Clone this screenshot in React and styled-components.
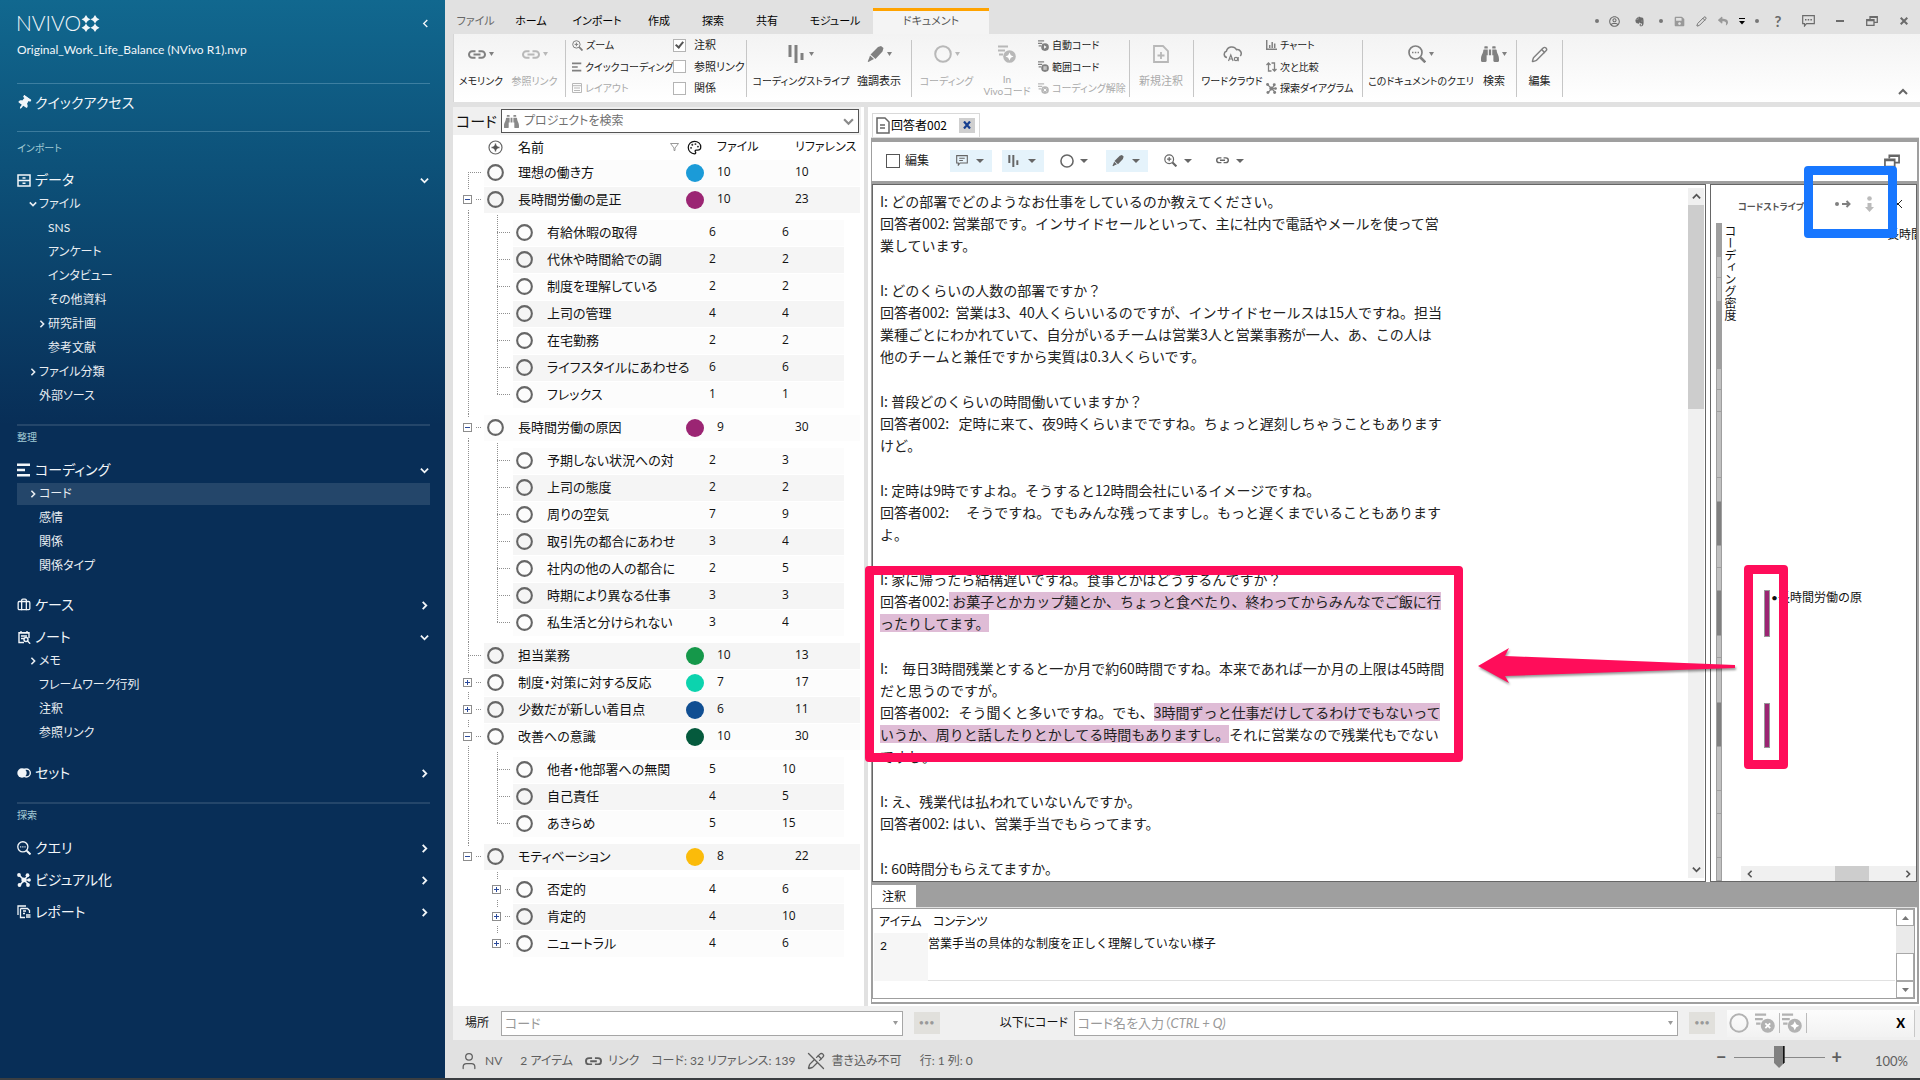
import React from "react";
import styled, { createGlobalStyle, css } from "styled-components";
import { Briefcase, Palette, Pencil, User, PencilOff } from "lucide-react";
import { FaThumbtack, FaBinoculars, FaSave, FaReply, FaEvernote, FaRegUserCircle } from "react-icons/fa";

const Global = createGlobalStyle`
  * { box-sizing: border-box; }
  body {
    margin: 0;
    background: #e1e1e1;
    color: #111;
    font-family: Lato, "Noto Sans CJK JP", sans-serif;
    font-feature-settings: "palt";
    font-size: 12px;
    line-height: 16px;
  }
  button, input, select {
    font: inherit;
    color: inherit;
    font-feature-settings: inherit;
    margin: 0;
    padding: 0;
    border: 0;
    border-radius: 0;
    background: none;
  }
  button { cursor: pointer; white-space: nowrap; }
  a { color: inherit; text-decoration: none; }
  svg { display: block; flex: none; }
  h1, h2, p { margin: 0; font: inherit; }
`;

/* ---------- icons ---------- */

const Svg = ({ w = 16, h = w, box, children, ...rest }) => (
  <svg width={w} height={h} viewBox={box || `0 0 ${w} ${h}`} fill="none" stroke="currentColor" aria-hidden="true" {...rest}>
    {children}
  </svg>
);

const Chevron = ({ dir = "down", size = 9, sw = 2 }) => {
  const d = { down: "M1 3l4 4 4-4", up: "M1 7l4-4 4 4", left: "M7 1L3 5l4 4", right: "M3 1l4 4-4 4" }[dir];
  return (
    <Svg w={size} box="0 0 10 10" strokeWidth={sw}>
      <path d={d} />
    </Svg>
  );
};

const Caret = ({ w = 6, up }) => (
  <Svg w={w} h={4} box="0 0 6 4" stroke="none" preserveAspectRatio="none">
    <path d={up ? "M0 4h6L3 0z" : "M0 0h6L3 4z"} fill="currentColor" />
  </Svg>
);

const PinIcon = styled(FaThumbtack).attrs({ size: 14 })`
  transform: rotate(35deg);
`;

const LinkIcon = ({ w = 18 }) => (
  <Svg w={w} h={w / 2} box="0 0 18 9" strokeWidth="2">
    <path d="M7.5 1.2H4.3a3.3 3.3 0 000 6.6h3.2M10.5 1.2h3.2a3.3 3.3 0 010 6.6h-3.2M5.5 4.5h7" />
  </Svg>
);

const ZoomPlus = ({ w = 11 }) => (
  <Svg w={w} box="0 0 11 11">
    <circle cx="4.4" cy="4.4" r="3.7" />
    <path d="M4.4 2.6v3.6M2.6 4.4h3.6" />
    <path d="M7.2 7.2l3.3 3.3" strokeWidth="1.8" />
  </Svg>
);

const LinesIcon = ({ w = 10 }) => (
  <Svg w={w} box="0 0 14 14" strokeWidth="2.4">
    <path d="M0 1.8h13M0 7h8M0 12.2h13" />
  </Svg>
);

const LayoutIcon = () => (
  <Svg w={10}>
    <path d="M.5.5h9v9h-9zM0 2.7h10M2 5h6M2 7.5h6" />
  </Svg>
);

const StripesIcon = ({ w = 18 }) => (
  <Svg w={w} h={w} box="0 0 18 18" strokeWidth="3">
    <path d="M2 0v12M8 0v18M14 8v7" />
  </Svg>
);

const MarkerIcon = ({ w = 17 }) => (
  <Svg w={w} box="0 0 17 17" stroke="none" fill="currentColor">
    <path d="M11 1l3-1 2.500 2-1 3.500-7 7.500-5-4.500zM3 9.500L7 13l-2.500 1.200-3 1.800-.8-.6L2 12.500z" />
  </Svg>
);

const CodeRing = ({ w = 18, sw = 2 }) => (
  <Svg w={w} box="0 0 18 18" strokeWidth={sw}>
    <circle cx="9" cy="9" r="7.8" />
  </Svg>
);

const CodeBadge = ({ w = 11, kind = "plus" }) => (
  <Svg w={w} box="0 0 18 18" strokeWidth="2">
    <path d="M0 1.500h10M0 5.500h7M1 9.500h4" />
    <circle cx="11.500" cy="11.500" r="6.300" fill="currentColor" stroke="none" />
    {kind === "plus" && <path d="M11.500 7.500l1.300 2.700 2.700 1.300-2.700 1.300-1.300 2.700-1.300-2.700-2.700-1.300 2.700-1.300z" fill="#fff" stroke="none" />}
    {kind === "play" && <path d="M10 8.500l4 3-4 3z" fill="#fff" stroke="none" />}
    {kind === "range" && <path d="M10 8.500v6M13 8.500v6" stroke="#fff" strokeWidth="1.500" />}
    {kind === "x" && <path d="M9.300 9.300l4.400 4.400M13.700 9.300l-4.400 4.400" stroke="#fff" strokeWidth="1.600" />}
  </Svg>
);

const NoteAdd = () => (
  <Svg w={16} h={18} strokeWidth="1.800">
    <path d="M1 1h9l5 5v11H1zM8 7v7M4.500 10.500h7" />
  </Svg>
);

const CloudIcon = () => (
  <Svg w={19} h={16} strokeWidth="1.500">
    <path d="M4 11.500a3.200 3.200 0 01-.6-6.200A5.500 5.500 0 0113.500 3.700a3.900 3.900 0 013.800 6.300" />
    <path d="M5.500 15l2.300-6 2.300 6M6.500 13h3" strokeWidth="1.200" />
    <circle cx="13" cy="13" r="1.700" strokeWidth="1.200" />
    <path d="M15.200 11v4.200" strokeWidth="1.200" />
  </Svg>
);

const ChartIcon = () => (
  <Svg w={11} h={10} strokeWidth="1.500">
    <path d="M.7 0v9.300H11M3.700 8V5M6.200 8V2M8.700 8V3.500" />
  </Svg>
);

const CompareIcon = () => (
  <Svg w={11} h={10} strokeWidth="1.300">
    <path d="M2.500 1v8H5.500M.5 3l2-2 2 2M8.500 9V1H5.500M6.500 7l2 2 2-2" />
  </Svg>
);

const NetIcon = ({ w = 11 }) => (
  <Svg w={w} box="0 0 14 14" strokeWidth="1.600">
    <path d="M2 2l10 10M11 2.500L3 12M7 7h6" />
    <g fill="currentColor" stroke="none">
      <circle cx="2" cy="2" r="1.900" />
      <circle cx="10.500" cy="2.200" r="1.900" />
      <circle cx="12.200" cy="7" r="1.700" />
      <circle cx="2.500" cy="12" r="1.900" />
      <circle cx="11" cy="12" r="1.900" />
      <circle cx="6.700" cy="7" r="2.400" />
    </g>
  </Svg>
);

const QueryIcon = ({ w = 18 }) => (
  <Svg w={w} box="0 0 18 18" strokeWidth="1.700">
    <circle cx="7.500" cy="7.500" r="6.500" />
    <path d="M12.500 12.500l4.800 4.800" strokeWidth="2.600" />
    <path d="M4 7.500h7" strokeDasharray="1.500 1.300" />
  </Svg>
);

const DataIcon = () => (
  <Svg w={14} h={13} strokeWidth="1.500">
    <path d="M1 1h12v11H1zM1 6.500h12M5.500 4h3M5.500 9.300h3" />
  </Svg>
);

const NotesIcon = () => (
  <Svg w={14} h={13} strokeWidth="1.400">
    <path d="M7 11.500H2V1.800h10V7M1.500 2h11M4 0v2M10 0v2M4 5h6M4 7.500h3" />
    <circle cx="9" cy="8.500" r="2" />
    <path d="M10.500 10l2.700 2.700" />
  </Svg>
);

const SetIcon = () => (
  <Svg w={14} h={10}>
    <circle cx="5" cy="5" r="4.700" fill="currentColor" stroke="none" />
    <circle cx="9.300" cy="5" r="4" strokeWidth="1.400" />
  </Svg>
);

const ReportIcon = () => (
  <Svg w={14} h={14} strokeWidth="1.300">
    <path d="M1 10V1h8M3.500 3.500h7l2 2V8M3.500 3.500v9H8M6 6h3M6 8.500h2M9 10h4.500M9 12h4.500" />
  </Svg>
);

const ChatIcon = ({ w = 13, dots = true }) => (
  <Svg w={w} h={w - 1} box="0 0 13 12" strokeWidth="1.200">
    <path d="M.7.7h11.600v8H4.500L2.500 11V8.700H.7z" />
    {dots ? <path d="M3 4.700h7" strokeWidth="1.500" strokeDasharray="1.500 1.200" /> : <path d="M3.500 3.500h6M3.500 6h4" />}
  </Svg>
);

const RestoreIcon = ({ w = 12 }) => (
  <Svg w={w} h={w - 2} box="0 0 12 10" strokeWidth="1.300">
    <path d="M4 3V.7h7.300v5.600H8M.7 3.700H8v5.600H.7zM.7 4.500H8M4 1.400h7" />
  </Svg>
);

const DocIcon = () => (
  <Svg w={14} h={17} strokeWidth="1.500">
    <path d="M1 1h8l4 4v11H1zM4 8h5M4 11h5" />
  </Svg>
);

const AddRing = () => (
  <Svg w={15} stroke="#666">
    <circle cx="7.500" cy="7.500" r="6.500" strokeWidth="1.200" />
    <path d="M7.500 3.500v8M3.500 7.500h8" strokeWidth="1.400" />
    <path d="M7.500 4.500l3 3-3 3-3-3z" fill="#555" stroke="none" />
  </Svg>
);

const FilterIcon = () => (
  <Svg w={9} h={8} stroke="#999" strokeWidth="1">
    <path d="M.5.5h8L5 5v2.500H4V5z" />
  </Svg>
);

const LogoMark = () => (
  <Svg w={19} h={17} fill="currentColor" stroke="none">
    {[[5, 4.300], [14, 4.300], [5, 12.700], [14, 12.700]].map(([x, y]) => (
      <path key={`${x}-${y}`} d={`M${x} ${y - 4.200}Q${x + 1} ${y - 1.200} ${x + 4.500} ${y}Q${x + 1} ${y + 1.200} ${x} ${y + 4.200}Q${x - 1} ${y + 1.200} ${x - 4.500} ${y}Q${x - 1} ${y - 1.200} ${x} ${y - 4.200}z`} />
    ))}
    {[[5, 4.300], [14, 4.300], [5, 12.700], [14, 12.700]].map(([x, y]) => (
      <path key={`c${x}-${y}`} d={`M${x} ${y - 2.600}l2.600 2.600-2.600 2.600-2.600-2.600z`} />
    ))}
  </Svg>
);

/* ---------- shell ---------- */

const Shell = styled.div`
  display: flex;
  height: 100vh;
  border-bottom: 2px solid #3b3e41;
`;

const Main = styled.main`
  flex: 1;
  min-width: 0;
  display: flex;
  flex-direction: column;
`;

/* ---------- sidebar ---------- */

const Sidebar = styled.nav`
  flex: none;
  width: 445px;
  padding: 10px 15px 0 16px;
  color: #f2f6f9;
  background: linear-gradient(#11688f 0, #0d527a 160px, #082e57 425px);
`;

const Brand = styled.div`
  display: flex;
  align-items: center;
  height: 26px;
`;

const BrandName = styled.span`
  font-size: 21px;
  font-weight: 300;
  line-height: 26px;
`;

const CollapseButton = styled.button`
  margin-left: auto;
`;

const ProjectName = styled.p`
  margin: 6px 0 25px;
  padding-left: 1px;
`;

const Rule = styled.hr`
  margin: ${(p) => p.$top || 0}px 0 0 1px;
  border: 0;
  height: 1px;
  background: rgba(130, 180, 205, 0.4);
  ${(p) => p.$thick && css`height: 2px; background: #24466a;`}
`;

const SectionLabel = styled.h2`
  margin-top: ${(p) => p.$top || 1}px;
  padding-left: 1px;
  font-size: 10px;
  line-height: 20px;
  color: #a3cbd5;
`;

const NavHead = styled.button`
  display: flex;
  align-items: center;
  gap: 4px;
  width: 100%;
  height: 24px;
  margin-top: ${(p) => p.$top || 0}px;
  padding: 0 1px;
  font-size: 14px;
  text-align: left;
  & > span { flex: 1; }
`;

const NavLink = styled.a`
  display: flex;
  align-items: center;
  height: 24px;
  margin-left: 1px;
  padding-left: ${(p) => (p.$deep ? 18 : 9)}px;
  border: solid transparent;
  border-width: 1px 0;
  color: #e8edf2;
  background: ${(p) => (p.$active ? "#24466a padding-box" : "none")};
`;

const Twisty = styled.span`
  width: 13px;
  display: flex;
  justify-content: center;
`;

function Nav({ icon, label, dir, top }) {
  return (
    <NavHead $top={top}>
      {icon}
      <span>{label}</span>
      {dir && <Chevron dir={dir} />}
    </NavHead>
  );
}

const Leaf = ({ label, deep, dir, active }) => (
  <NavLink href="#" $deep={deep} $active={active}>
    <Twisty>{dir && <Chevron dir={dir} size={8} />}</Twisty>
    {label}
  </NavLink>
);

function SideNav() {
  return (
    <Sidebar aria-label="ナビゲーション">
      <Brand>
        <BrandName>NVIVO</BrandName>
        <LogoMark />
        <CollapseButton aria-label="折りたたむ"><Chevron dir="left" size={9} sw={1.500} /></CollapseButton>
      </Brand>
      <ProjectName>Original_Work_Life_Balance (NVivo R1).nvp</ProjectName>
      <Rule />
      <Nav top={7} icon={<PinIcon />} label="クイックアクセス" />
      <Rule $top={16} />
      <SectionLabel $top={6}>インポート</SectionLabel>
      <Nav top={10} icon={<DataIcon />} label="データ" dir="down" />
      <Leaf label="ファイル" dir="down" />
      <Leaf deep label="SNS" />
      <Leaf deep label="アンケート" />
      <Leaf deep label="インタビュー" />
      <Leaf deep label="その他資料" />
      <Leaf deep label="研究計画" dir="right" />
      <Leaf deep label="参考文献" />
      <Leaf label="ファイル分類" dir="right" />
      <Leaf label="外部ソース" />
      <Rule $top={16} $thick />
      <SectionLabel>整理</SectionLabel>
      <Nav top={11} icon={<LinesIcon w={14} />} label="コーディング" dir="down" />
      <Leaf label="コード" dir="right" active />
      <Leaf label="感情" />
      <Leaf label="関係" />
      <Leaf label="関係タイプ" />
      <Nav top={15} icon={<Briefcase size={14} strokeWidth={2.200} />} label="ケース" dir="right" />
      <Nav top={8} icon={<NotesIcon />} label="ノート" dir="down" />
      <Leaf label="メモ" dir="right" />
      <Leaf label="フレームワーク行列" />
      <Leaf label="注釈" />
      <Leaf label="参照リンク" />
      <Nav top={16} icon={<SetIcon />} label="セット" dir="right" />
      <Rule $top={17} $thick />
      <SectionLabel>探索</SectionLabel>
      <Nav top={11} icon={<QueryIcon w={14} />} label="クエリ" dir="right" />
      <Nav top={8} icon={<NetIcon w={14} />} label="ビジュアル化" dir="right" />
      <Nav top={8} icon={<ReportIcon />} label="レポート" dir="right" />
    </Sidebar>
  );
}

/* ---------- title bar and ribbon ---------- */

const TitleBar = styled.header`
  flex: none;
  display: flex;
  height: 34px;
  padding-left: 9px;
  font-size: 11px;
`;

const Tab = styled.button`
  height: 26px;
  margin-top: 8px;
  width: ${(p) => p.$w}px;
  color: ${(p) => (p.$muted ? "#666" : "#000")};
  ${(p) => p.$active && css`
    border-top: 3px solid #ffa300;
    background: #f4f4f4;
    color: #555;
    padding-bottom: 3px;
  `}
`;

const QuickTools = styled.div`
  display: flex;
  align-items: center;
  margin-left: auto;
  height: 42px;
  color: #6b6b6b;
`;

const QuickTool = styled.button`
  display: flex;
  justify-content: center;
  align-items: center;
  width: ${(p) => p.$w}px;
  font-size: 15px;
  font-weight: 700;
`;

const Dot = styled.span`
  width: 14px;
  display: flex;
  justify-content: center;
  &::before {
    content: "";
    width: 4px;
    height: 4px;
    border-radius: 50%;
    background: #777;
  }
`;

const Ribbon = styled.div`
  flex: none;
  display: flex;
  height: 68px;
  margin-left: 8px;
  border-left: 1px solid #d6d6d6;
  background: linear-gradient(#f3f3f3, #fff);
  font-size: 11px;
`;

const Group = styled.div`
  display: flex;
  height: 57px;
  margin-top: 6px;
  width: ${(p) => p.$w}px;
  padding-left: ${(p) => p.$pad || 0}px;
  border-right: 1px solid #c6c6c6;
`;

const BigButton = styled.button`
  display: flex;
  flex-direction: column;
  align-items: center;
  width: ${(p) => p.$w}px;
  color: ${(p) => (p.disabled ? "#aaa" : "#222")};
`;

const BigIcon = styled.span`
  display: flex;
  align-items: center;
  gap: 3px;
  height: 28px;
  margin-bottom: 5px;
  color: ${(p) => (p.$off ? "#b8b8b8" : "#808080")};
`;

const BigLabel = styled.span`
  white-space: pre;
  font-size: ${(p) => (p.$kanji ? 11 : 10)}px;
  line-height: ${(p) => (p.$two ? 12 : 16)}px;
`;

const SmallColumn = styled.div`
  display: flex;
  flex-direction: column;
  justify-content: space-between;
  height: 59px;
  margin-top: -3px;
  width: ${(p) => p.$w}px;
`;

const SmallButton = styled.button`
  display: flex;
  align-items: center;
  gap: 3px;
  height: 16px;
  font-size: 10px;
  color: ${(p) => (p.disabled ? "#aaa" : "#222")};
  & > svg { color: ${(p) => (p.disabled ? "#b8b8b8" : "#808080")}; }
`;

const CheckLabel = styled.label`
  display: flex;
  align-items: center;
  gap: ${(p) => p.$gap || 8}px;
  height: 16px;
  color: #222;
`;

const CheckBox = styled.input.attrs({ type: "checkbox" })`
  appearance: none;
  width: ${(p) => p.$size || 13}px;
  height: ${(p) => p.$size || 13}px;
  border: 1px solid ${(p) => p.$line || "#b4b4b4"};
  background: #fff;
  display: grid;
  place-items: center;
  &:checked::before {
    content: "";
    width: 3px;
    height: 6px;
    margin-bottom: 2px;
    border: solid #555;
    border-width: 0 2px 2px 0;
    transform: rotate(40deg);
  }
`;

const RibbonEnd = styled.button`
  align-self: flex-end;
  margin: 0 12px 5px auto;
  color: #666;
`;

const Big = ({ icon, label, w, off, menu, two, kanji }) => (
  <BigButton $w={w} disabled={off}>
    <BigIcon $off={off}>{icon}{menu && <Caret w={5} />}</BigIcon>
    <BigLabel $two={two} $kanji={kanji}>{label}</BigLabel>
  </BigButton>
);

function Top() {
  return (
    <>
      <TitleBar>
        <Tab $w={43} $muted>ファイル</Tab>
        <Tab $w={68}>ホーム</Tab>
        <Tab $w={64}>インポート</Tab>
        <Tab $w={60}>作成</Tab>
        <Tab $w={48}>探索</Tab>
        <Tab $w={60}>共有</Tab>
        <Tab $w={76}>モジュール</Tab>
        <Tab $w={116} $active>ドキュメント</Tab>
        <QuickTools>
          <Dot />
          <QuickTool $w={20} aria-label="ユーザー"><FaRegUserCircle size={11} /></QuickTool>
          <QuickTool $w={30} aria-label="Evernote"><FaEvernote size={11} /></QuickTool>
          <Dot />
          <QuickTool $w={22} aria-label="保存"><FaSave size={11} color="#999" /></QuickTool>
          <QuickTool $w={22} aria-label="編集"><Pencil size={11} /></QuickTool>
          <QuickTool $w={22} aria-label="元に戻す"><FaReply size={10} color="#999" /></QuickTool>
          <QuickTool $w={16} aria-label="カスタマイズ">
            <Svg w={6} h={7} stroke="#000"><path d="M0 .5h6" /><path d="M0 3h6L3 6.500z" fill="#000" stroke="none" /></Svg>
          </QuickTool>
          <Dot />
          <QuickTool $w={28}>?</QuickTool>
          <QuickTool $w={32} aria-label="フィードバック"><ChatIcon /></QuickTool>
          <QuickTool $w={32} aria-label="最小化"><Svg w={8} h={2} strokeWidth="2"><path d="M0 1h8" /></Svg></QuickTool>
          <QuickTool $w={32} aria-label="元のサイズに戻す"><RestoreIcon /></QuickTool>
          <QuickTool $w={32} aria-label="閉じる"><Svg w={8} h={8} strokeWidth="2"><path d="M.7.7l6.600 6.600M7.300.7L.7 7.300" /></Svg></QuickTool>
        </QuickTools>
      </TitleBar>
      <Ribbon>
        <Group $w={112} $pad={2}>
          <Big w={50} icon={<LinkIcon />} label="メモリンク" menu />
          <Big w={57} icon={<LinkIcon />} label="参照リンク" menu off />
        </Group>
        <Group $w={181} $pad={6}>
          <SmallColumn $w={101}>
            <SmallButton><ZoomPlus />ズーム</SmallButton>
            <SmallButton><LinesIcon />クイックコーディング</SmallButton>
            <SmallButton disabled><LayoutIcon />レイアウト</SmallButton>
          </SmallColumn>
          <SmallColumn>
            <CheckLabel><CheckBox defaultChecked />注釈</CheckLabel>
            <CheckLabel><CheckBox />参照リンク</CheckLabel>
            <CheckLabel><CheckBox />関係</CheckLabel>
          </SmallColumn>
        </Group>
        <Group $w={165} $pad={5}>
          <Big w={98} icon={<StripesIcon />} label="コーディングストライプ" menu />
          <Big w={58} icon={<MarkerIcon />} label="強調表示" menu kanji />
        </Group>
        <Group $w={218} $pad={5}>
          <Big w={59} icon={<CodeRing />} label="コーディング" menu off />
          <Big w={62} icon={<CodeBadge w={18} />} label={"In\nVivoコード"} off two />
          <SmallColumn>
            <SmallButton><CodeBadge kind="play" />自動コード</SmallButton>
            <SmallButton><CodeBadge kind="range" />範囲コード</SmallButton>
            <SmallButton disabled><CodeBadge kind="x" />コーディング解除</SmallButton>
          </SmallColumn>
        </Group>
        <Group $w={64}>
          <Big w={62} icon={<NoteAdd />} label="新規注釈" off kanji />
        </Group>
        <Group $w={169} $pad={4}>
          <Big w={68} icon={<CloudIcon />} label="ワードクラウド" />
          <SmallColumn>
            <SmallButton><ChartIcon />チャート</SmallButton>
            <SmallButton><CompareIcon />次と比較</SmallButton>
            <SmallButton><NetIcon />探索ダイアグラム</SmallButton>
          </SmallColumn>
        </Group>
        <Group $w={154} $pad={4}>
          <Big w={108} icon={<QueryIcon />} label="このドキュメントのクエリ" menu />
          <Big w={38} icon={<FaBinoculars size={18} />} label="検索" menu kanji />
        </Group>
        <Group $w={46}>
          <Big w={46} icon={<Pencil size={17} />} label="編集" kanji />
        </Group>
        <RibbonEnd aria-label="リボンを閉じる"><Chevron dir="up" size={10} /></RibbonEnd>
      </Ribbon>
    </>
  );
}

/* ---------- code tree ---------- */

const Panels = styled.div`
  flex: 1;
  min-height: 0;
  display: flex;
  gap: 4px;
  margin-top: 5px;
  padding-left: 8px;
`;

const CodePanel = styled.section`
  flex: none;
  width: 411px;
  background: #fff;
  overflow: hidden;
`;

const CodeTop = styled.div`
  display: flex;
  align-items: center;
  height: 28px;
  margin-right: 3px;
  padding: 0 2px 0 3px;
  background: #f0f0f0;
`;

const PanelTitle = styled.h1`
  flex: none;
  width: 45px;
  font-size: 15px;
`;

const SearchField = styled.div`
  flex: 1;
  display: flex;
  align-items: center;
  gap: 5px;
  height: 24px;
  padding: 0 4px 0 2px;
  border: 1px solid #555;
  background: #fff;
  color: #666;
  & > svg { color: #8a8a8a; }
  & > input {
    flex: 1;
    min-width: 0;
    outline: 0;
    font-size: 12px;
  }
  & > input::placeholder { color: #707070; opacity: 1; }
`;

const dots = (dir) => `repeating-linear-gradient(${dir}, #8f8f8f 0 1px, transparent 1px 2px)`;

const Tree = styled.table`
  display: block;
  font-size: 13px;
`;

const TreeHead = styled.thead`
  display: block;
`;

const TreeBody = styled.tbody`
  display: block;
  padding: ${(p) => (p.$child ? 6 : 0)}px 0;
  background-repeat: no-repeat;
  background-image: ${(p) => (p.$trunk ? dots("to bottom") : "none")}, ${(p) => (p.$child ? dots("to bottom") : "none")};
  background-position: 15px ${(p) => p.$from || 0}px, 44px 2px;
  background-size: 1px calc(100% - ${(p) => (p.$from || 0) + (p.$to || 0)}px), 1px calc(100% - 22px);
`;

const TreeRow = styled.tr`
  display: grid;
  grid-template-columns: ${(p) => (p.$child ? "60px 34px 162px 73px 1fr" : "31px 34px 161px 38px 78px 1fr")};
  align-items: center;
  height: 27px;
  padding-right: ${(p) => (p.$child ? 20 : 4)}px;
`;

const HeadRow = styled(TreeRow)`
  height: 24px;
`;

const Cell = styled.td`
  height: 26px;
  padding: 0;
  line-height: 24px;
  white-space: nowrap;
  overflow: hidden;
  background: ${(p) => (p.$odd ? "#f5f5f5" : "#fcfcfc")};
`;

const NumberCell = styled(Cell)`
  font-family: "Open Sans", sans-serif;
  font-size: 12px;
`;

const IconCell = styled(Cell)`
  display: flex;
  align-items: center;
  padding-left: ${(p) => p.$pad}px;
  color: #666;
`;

const HeadCell = styled.th`
  padding: 0 0 0 ${(p) => p.$pad || 0}px;
  display: flex;
  align-items: center;
  justify-content: space-between;
  font-weight: 400;
  font-size: ${(p) => (p.$kana ? 12 : 13)}px;
  white-space: nowrap;
`;

const Lead = styled.td`
  display: flex;
  align-items: center;
  justify-content: flex-end;
  height: 27px;
  padding: 0 2px 0 0;
  &::after {
    content: "";
    width: ${(p) => (p.$box ? 6 : 14)}px;
    height: 1px;
    background: ${dots("to right")};
  }
`;

const Expander = styled.button`
  display: grid;
  place-items: center;
  width: 9px;
  height: 9px;
  margin-right: 4px;
  border: 1px solid #8d8d8d;
  color: #2b4a9b;
  background: #fff;
  outline: 5px solid #fff;
  outline-offset: 0;
`;

const Swatch = styled.span`
  width: 18px;
  height: 18px;
  border-radius: 50%;
  background: ${(p) => p.$color};
`;

const BLUE = "#1b9bd8";
const PURPLE = "#9b2573";

const tree = [
  { from: 13, rows: [["理想の働き方", 10, 10, "", BLUE], ["長時間労働の是正", 10, 23, "-", PURPLE]] },
  { child: true, rows: [["有給休暇の取得", 6, 6], ["代休や時間給での調", 2, 2], ["制度を理解している", 2, 2], ["上司の管理", 4, 4], ["在宅勤務", 2, 2], ["ライフスタイルにあわせる", 6, 6], ["フレックス", 1, 1]] },
  { rows: [["長時間労働の原因", 9, 30, "-", PURPLE]] },
  { child: true, rows: [["予期しない状況への対", 2, 3], ["上司の態度", 2, 2], ["周りの空気", 7, 9], ["取引先の都合にあわせ", 3, 4], ["社内の他の人の都合に", 2, 5], ["時期により異なる仕事", 3, 3], ["私生活と分けられない", 3, 4]] },
  { shift: 1, rows: [["担当業務", 10, 13, "", "#15984a"], ["制度・対策に対する反応", 7, 17, "+", "#0cd3ae"], ["少数だが新しい着目点", 6, 11, "+", "#104e92"], ["改善への意識", 10, 30, "-", "#055a3d"]] },
  { child: true, rows: [["他者・他部署への無関", 5, 10], ["自己責任", 4, 5], ["あきらめ", 5, 15]] },
  { shift: 1, to: 14, rows: [["モティベーション", 8, 22, "-", "#fbbb0a"]] },
  { child: true, trunk: false, rows: [["否定的", 4, 6, "+"], ["肯定的", 4, 10, "+"], ["ニュートラル", 4, 6, "+"]] },
];

function CodeTree() {
  return (
    <CodePanel>
      <CodeTop>
        <PanelTitle>コード</PanelTitle>
        <SearchField>
          <FaBinoculars size={15} />
          <input aria-label="プロジェクトを検索" placeholder="プロジェクトを検索" />
          <Chevron size={11} />
        </SearchField>
      </CodeTop>
      <Tree>
        <TreeHead>
          <HeadRow>
            <HeadCell />
            <HeadCell $pad={4}><AddRing /></HeadCell>
            <HeadCell>名前<FilterIcon /></HeadCell>
            <HeadCell $pad={8}><Palette size={15} /></HeadCell>
            <HeadCell $kana>ファイル</HeadCell>
            <HeadCell $kana>リファレンス</HeadCell>
          </HeadRow>
        </TreeHead>
        {tree.map(({ child, from, to, trunk = true, shift = 0, rows }, i) => (
          <TreeBody key={i} $child={child} $trunk={trunk} $from={from} $to={to}>
            {rows.map(([name, files, refs, box, color], j) => {
              const odd = (j + shift) % 2 === 1;
              return (
                <TreeRow key={name} $child={child}>
                  <Lead $box={box}>
                    {box && (
                      <Expander aria-label={box === "+" ? "展開" : "折りたたむ"}>
                        <Svg w={5}><path d={box === "+" ? "M0 2.500h5M2.500 0v5" : "M0 2.500h5"} /></Svg>
                      </Expander>
                    )}
                  </Lead>
                  <IconCell $odd={odd} $pad={3}><CodeRing w={17} sw={2.200} /></IconCell>
                  <Cell $odd={odd}>{name}</Cell>
                  {!child && <IconCell $odd={odd} $pad={7}><Swatch $color={color} /></IconCell>}
                  <NumberCell $odd={odd}>{files}</NumberCell>
                  <NumberCell $odd={odd}>{refs}</NumberCell>
                </TreeRow>
              );
            })}
          </TreeBody>
        ))}
      </Tree>
    </CodePanel>
  );
}

/* ---------- document ---------- */

const DocPanel = styled.section`
  flex: 1;
  min-width: 0;
  display: flex;
  flex-direction: column;
  background: #fff;
  padding: 6px 1px 2px 3px;
`;

const DocTab = styled.div`
  flex: none;
  display: flex;
  align-items: center;
  align-self: flex-start;
  gap: 1px;
  height: 25px;
  margin-left: 1px;
  padding: 0 4px 2px 3px;
  border: 1px solid #d9d9d9;
  border-bottom: 0;
  color: #666;
`;

const DocTabName = styled.span`
  width: 67px;
  font-family: "Noto Sans CJK JP", sans-serif;
  color: #000;
`;

const CloseTab = styled.button`
  display: grid;
  place-items: center;
  width: 16px;
  height: 15px;
  background: #cfcfcf;
  color: #163f8f;
`;

const Frame = styled.div`
  flex: 1;
  min-height: 0;
  display: flex;
  flex-direction: column;
  border: 1px solid #9f9f9f;
  border-width: 4px 2px 2px 1px;
  box-shadow: 0 -1px #ddd;
`;

const DocTools = styled.div`
  flex: none;
  display: flex;
  align-items: center;
  gap: 10px;
  height: 42px;
  padding: 0 17px 2px 14px;
  border-bottom: 3px solid #9f9f9f;
  color: #666;
`;

const EditLabel = styled(CheckLabel)`
  width: 54px;
`;

const ToolButton = styled.button`
  display: flex;
  align-items: center;
  justify-content: space-between;
  width: 42px;
  height: 22px;
  padding: 0 8px 0 6px;
  background: ${(p) => (p.$on ? "#e5f3fb" : "none")};
`;

const Detach = styled.button`
  margin-left: auto;
`;

const Workspace = styled.div`
  position: relative;
  flex: 1;
  min-height: 0;
  display: flex;
  gap: 4px;
`;

const Box = styled.div`
  border: 1px solid #666;
  background: #fff;
  display: flex;
  min-width: 0;
  min-height: 0;
`;

const DocBox = styled(Box)`
  flex: 1;
  padding: 3px 1px 3px 7px;
`;

const Transcript = styled.article`
  flex: 1;
  padding-top: 2px;
  overflow: hidden;
  white-space: pre;
  font-family: "Noto Sans CJK JP", sans-serif;
  font-feature-settings: normal;
  font-size: 14px;
  line-height: 22px;
  color: #222;
  & > p { margin-bottom: 23px; }
`;

const Coded = styled.mark`
  display: inline-block;
  line-height: 18px;
  background: #dfbcd6;
  color: inherit;
`;

const ScrollTrack = styled.div`
  flex: none;
  display: flex;
  flex-direction: ${(p) => (p.$row ? "row" : "column")};
  ${(p) => (p.$row ? "height: 15px;" : "width: 16px;")}
  background: #f0f0f0;
`;

const ScrollArrow = styled.button`
  display: grid;
  place-items: center;
  ${(p) => (p.$row ? "width: 17px; height: 15px;" : "width: 16px; height: 17px;")}
  color: #555;
`;

const ScrollGap = styled.div`
  flex: ${(p) => p.$n};
  background: ${(p) => (p.$thumb ? "#cdcdcd" : "none")};
`;

const StripeBox = styled(Box)`
  flex: none;
  width: 207px;
  flex-direction: column;
  overflow: hidden;
`;

const StripeHead = styled.div`
  flex: none;
  display: flex;
  align-items: center;
  height: 38px;
  padding-left: 27px;
`;

const StripeTitle = styled.h2`
  flex: none;
  width: 88px;
  padding-top: 6px;
  font-size: 9px;
  font-weight: 700;
  color: #555;
`;

const StripeTool = styled.button`
  flex: none;
  display: grid;
  place-items: center;
  width: ${(p) => p.$w}px;
  color: ${(p) => p.$c};
`;

const StripeClose = styled(StripeTool)`
  place-items: center end;
  padding-right: 14px;
`;

const StripeBody = styled.div`
  flex: 1;
  display: flex;
  padding-left: 5px;
  min-height: 0;
`;

const Density = styled.div`
  width: 6px;
  display: flex;
  flex-direction: column;
  border: solid #9f9f9f;
  border-width: 0 1px;
`;

const Segment = styled.div`
  flex: ${(p) => p.$n};
  background: ${(p) => p.$c};
  border-bottom: 1px solid #9f9f9f;
`;

const DensityName = styled.span`
  writing-mode: vertical-rl;
  width: 14px;
  padding-top: 2px;
  line-height: 14px;
  font-feature-settings: normal;
`;

const StripeCanvas = styled.div`
  position: relative;
  flex: 1;
  display: flex;
  align-items: flex-end;
  padding-left: 5px;
  font-feature-settings: normal;
  white-space: nowrap;
  & > ${ScrollTrack} { flex: 1; }
`;

const Stripe = styled.span`
  position: absolute;
  left: 28px;
  top: ${(p) => p.$y}px;
  width: 6px;
  height: ${(p) => p.$h}px;
  background: ${PURPLE};
  border: 1px solid #999;
`;

const StripeText = styled.span`
  position: absolute;
  left: ${(p) => p.$x}px;
  top: ${(p) => p.$y}px;
`;

const Callout = styled.div`
  position: absolute;
  border: 9px solid ${(p) => p.$c};
  border-radius: 4px;
  pointer-events: none;
`;

const TextCallout = styled(Callout)`
  left: -7px;
  top: 382px;
  width: 598px;
  height: 196px;
`;

const StripeCallout = styled(Callout)`
  right: 129px;
  top: 381px;
  width: 44px;
  height: 204px;
`;

const ToolCallout = styled(Callout)`
  right: 20px;
  top: -18px;
  width: 93px;
  height: 72px;
`;

const CalloutArrow = styled.svg`
  position: absolute;
  left: 606px;
  top: 462px;
  filter: drop-shadow(1px 2px 1px rgba(0, 0, 0, 0.4));
  pointer-events: none;
`;

const SEG_LIGHT = "#c0c0c0";
const SEG_MID = "#9f9f9f";
const SEG_DARK = "#808080";
const segments = [
  [34, SEG_MID], [21, SEG_LIGHT], [23, SEG_LIGHT], [68, SEG_MID], [21, SEG_LIGHT], [22, SEG_LIGHT], [67, SEG_LIGHT], [24, SEG_LIGHT],
  [44, SEG_DARK], [22, SEG_LIGHT], [22, SEG_LIGHT], [46, SEG_DARK], [21, SEG_LIGHT], [46, SEG_LIGHT], [44, SEG_DARK],
  [44, SEG_LIGHT], [23, SEG_LIGHT], [44, SEG_LIGHT], [23, SEG_LIGHT],
];

/* ---------- annotations ---------- */

const NoteTabs = styled.div`
  flex: none;
  height: 26px;
  padding: 3px 0 0;
  background: #9f9f9f;
  border-bottom: 1px solid #e1e1e1;
`;

const NoteTab = styled.button`
  display: block;
  width: 44px;
  height: 23px;
  background: #fff;
`;

const NoteBox = styled.div`
  flex: none;
  display: flex;
  height: 91px;
  margin: 0 2px 3px 0;
  border: 1px solid #9f9f9f;
`;

const NoteTable = styled.table`
  flex: 1;
  display: block;
  padding: 0 1px;
  & thead, & tbody { display: block; }
  & tr { display: grid; grid-template-columns: 54px 1fr; }
  & th { font-weight: 400; text-align: left; padding: 5px 0 0 5px; height: 24px; }
  & td { height: 48px; padding: 3px 0 0; border-bottom: 1px solid #e1e1e1; font-feature-settings: normal; }
  & td:first-child { background: #f6f6f6; padding: 5px 0 0 6px; border-color: #f6f6f6; }
`;

const NoteScroll = styled.div`
  width: 18px;
  display: flex;
  flex-direction: column;
  background: #eaeaea;
  color: #777;
`;

const NoteScrollPart = styled.button`
  display: grid;
  place-items: center;
  height: ${(p) => p.$h}px;
  margin-top: ${(p) => p.$top || 0}px;
  border: 1px solid #a8a8a8;
  background: #fff;
`;

function Document() {
  return (
    <DocPanel>
      <DocTab>
        <DocIcon />
        <DocTabName>回答者002</DocTabName>
        <CloseTab aria-label="閉じる"><Svg w={8} strokeWidth="2.200"><path d="M1 .5l6 7M7 .5l-6 7" /></Svg></CloseTab>
      </DocTab>
      <Frame>
        <DocTools>
          <EditLabel $gap={5}><CheckBox $size={14} $line="#555" />編集</EditLabel>
          <ToolButton $on aria-label="注釈"><ChatIcon w={12} dots={false} /><Caret w={8} /></ToolButton>
          <ToolButton $on aria-label="コーディングストライプ"><StripesIcon w={12} /><Caret w={8} /></ToolButton>
          <ToolButton aria-label="コーディング"><CodeRing w={14} /><Caret w={8} /></ToolButton>
          <ToolButton $on aria-label="強調表示"><MarkerIcon w={12} /><Caret w={8} /></ToolButton>
          <ToolButton aria-label="ズーム"><ZoomPlus w={13} /><Caret w={8} /></ToolButton>
          <ToolButton aria-label="リンク"><LinkIcon w={13} /><Caret w={8} /></ToolButton>
          <Detach aria-label="切り離す"><RestoreIcon w={16} /></Detach>
        </DocTools>
        <Workspace>
          <DocBox>
            <Transcript>
              <p>{"I: どの部署でどのようなお仕事をしているのか教えてください。\n回答者002: 営業部です。インサイドセールといって、主に社内で電話やメールを使って営\n業しています。"}</p>
              <p>{"I: どのくらいの人数の部署ですか？\n回答者002:  営業は3、40人くらいいるのですが、インサイドセールスは15人ですね。担当\n業種ごとにわかれていて、自分がいるチームは営業3人と営業事務が一人、あ、この人は\n他のチームと兼任ですから実質は0.3人くらいです。"}</p>
              <p>{"I: 普段どのくらいの時間働いていますか？\n回答者002:   定時に来て、夜9時くらいまでですね。ちょっと遅刻しちゃうこともあります\nけど。"}</p>
              <p>{"I: 定時は9時ですよね。そうすると12時間会社にいるイメージですね。\n回答者002:　 そうですね。でもみんな残ってますし。もっと遅くまでいることもあります\nよ。"}</p>
              <p>
                {"I: 家に帰ったら結構遅いですね。食事とかはどうするんですか？\n回答者002:"}
                <Coded>{" お菓子とかカップ麺とか、ちょっと食べたり、終わってからみんなでご飯に行"}</Coded>
                {"\n"}
                <Coded>ったりしてます。</Coded>
              </p>
              <p>
                {"I:　毎日3時間残業とすると一か月で約60時間ですね。本来であれば一か月の上限は45時間\nだと思うのですが。\n回答者002:   そう聞くと多いですね。でも、"}
                <Coded>3時間ずっと仕事だけしてるわけでもないって</Coded>
                {"\n"}
                <Coded>いうか、周りと話したりとかしてる時間もありますし。</Coded>
                {"それに営業なので残業代もでない\nですし。"}
              </p>
              <p>{"I: え、残業代は払われていないんですか。\n回答者002: はい、営業手当でもらってます。"}</p>
              <p>{"I: 60時間分もらえてますか。"}</p>
            </Transcript>
            <ScrollTrack>
              <ScrollArrow aria-label="上へ"><Chevron dir="up" size={9} /></ScrollArrow>
              <ScrollGap $n={204} $thumb />
              <ScrollGap $n={453} />
              <ScrollArrow aria-label="下へ"><Chevron size={9} /></ScrollArrow>
            </ScrollTrack>
          </DocBox>
          <StripeBox>
            <StripeHead>
              <StripeTitle>コードストライプ</StripeTitle>
              <StripeTool $w={34} $c="#808080" aria-label="横方向">
                <Svg w={16} h={8} strokeWidth="2"><circle cx="2" cy="4" r="2" fill="currentColor" stroke="none" /><path d="M7 4h8M11.500 1l3 3-3 3" /></Svg>
              </StripeTool>
              <StripeTool $w={18} $c="#bbb" aria-label="縦方向">
                <Svg w={9} h={17} stroke="none" fill="currentColor"><circle cx="4.500" cy="2.500" r="2.300" /><path d="M2.500 7h4v4H9l-4.500 5L0 11h2.500z" /></Svg>
              </StripeTool>
              <StripeClose $w={38} $c="#222" aria-label="閉じる"><Svg w={8}><path d="M0 0l8 8M8 0L0 8" /></Svg></StripeClose>
            </StripeHead>
            <StripeBody>
              <Density>{segments.map(([n, c], i) => <Segment key={i} $n={n} $c={c} />)}</Density>
              <DensityName>コーディング密度</DensityName>
              <StripeCanvas>
                <StripeText $x={151} $y={4}>長時間</StripeText>
                <Stripe $y={367} $h={47} />
                <Stripe $y={480} $h={45} />
                <StripeText $x={35} $y={367}>•</StripeText>
                <StripeText $x={42} $y={367}>長時間労働の原</StripeText>
                <ScrollTrack $row>
                  <ScrollArrow $row aria-label="左へ"><Chevron dir="left" size={8} /></ScrollArrow>
                  <ScrollGap $n={76} />
                  <ScrollGap $n={33} $thumb />
                  <ScrollGap $n={30} />
                  <ScrollArrow $row aria-label="右へ"><Chevron dir="right" size={8} /></ScrollArrow>
                </ScrollTrack>
              </StripeCanvas>
            </StripeBody>
          </StripeBox>
          <TextCallout $c="#ff0d5a" />
          <StripeCallout $c="#ff0d5a" />
          <ToolCallout $c="#1877ff" />
          <CalloutArrow width="258" height="38" aria-hidden="true">
            <path d="M0 20L31 2l-4 8 230 9v3L27 30l4 7z" fill="#ff0d5a" />
          </CalloutArrow>
        </Workspace>
        <NoteTabs><NoteTab>注釈</NoteTab></NoteTabs>
        <NoteBox>
          <NoteTable>
            <thead><tr><th>アイテム</th><th>コンテンツ</th></tr></thead>
            <tbody><tr><td>2</td><td>営業手当の具体的な制度を正しく理解していない様子</td></tr></tbody>
          </NoteTable>
          <NoteScroll>
            <NoteScrollPart $h={17} aria-label="上へ"><Caret w={7} up /></NoteScrollPart>
            <NoteScrollPart $h={28} $top={27} aria-label="スクロール" />
            <NoteScrollPart $h={17} aria-label="下へ"><Caret w={7} /></NoteScrollPart>
          </NoteScroll>
        </NoteBox>
      </Frame>
    </DocPanel>
  );
}

/* ---------- bottom bars ---------- */

const CodeBar = styled.div`
  flex: none;
  display: flex;
  align-items: center;
  height: 34px;
  margin-left: 8px;
  padding: 0 5px 0 12px;
  background: #f0f0f0;
  font-size: 13px;
`;

const BarLabel = styled.label`
  width: ${(p) => p.$w}px;
  font-size: 12px;
`;

const Combo = styled.div`
  display: flex;
  align-items: center;
  flex: ${(p) => p.$n} 1 0;
  height: 25px;
  padding: 0 4px 0 3px;
  border: 1px solid #a6a6a6;
  background: #fff;
  color: #999;
  & > select, & > input { flex: 1; appearance: none; outline: 0; min-width: 0; }
  & > input { font-style: italic; font-synthesis: none; }
  & > input::placeholder { color: #999; opacity: 1; }
`;

const MoreButton = styled.button`
  width: 26px;
  height: 22px;
  margin: 0 ${(p) => p.$after}px 0 11px;
  background: #e1e0dc;
  color: #999;
  font-size: 9px;
`;

const CodeActions = styled.div`
  display: flex;
  align-items: center;
  width: 188px;
  height: 27px;
  color: #b2b2b2;
  background: linear-gradient(#fcfcfc, #f2f2f2);
  border-right: 1px solid #c8c8c8;
`;

const ActionIcon = styled.button`
  padding: 0 4px 0 2px;
  border-right: ${(p) => (p.$line ? "1px solid #bbb" : "0")};
`;

const CloseBar = styled.button`
  margin: 0 9px 0 auto;
  color: #000;
  font-weight: 900;
`;

const StatusBar = styled.footer`
  flex: none;
  display: flex;
  align-items: center;
  height: 38px;
  padding: 4px 12px 0 14px;
  color: #5f5f5f;
`;

const Status = styled.span`
  display: flex;
  align-items: center;
  gap: 6px;
  margin-right: ${(p) => p.$after || 12}px;
`;

const Zoomer = styled.div`
  display: flex;
  align-items: center;
  gap: 7px;
  margin-left: auto;
  padding-bottom: 8px;
  & > button { font-size: 18px; font-weight: 700; line-height: 16px; }
`;

const Slider = styled.input.attrs({ type: "range" })`
  appearance: none;
  width: 91px;
  height: 22px;
  background: linear-gradient(#888, #888) center / 100% 1px no-repeat;
  &::-webkit-slider-thumb {
    appearance: none;
    width: 11px;
    height: 22px;
    background: #808080;
    border-right: 2px solid #111;
    clip-path: polygon(0 0, 100% 0, 100% 75%, 50% 100%, 0 75%);
  }
`;

const Percent = styled.span`
  width: 36px;
  margin-left: 30px;
  font-size: 13px;
  text-align: right;
`;

function Bottom() {
  return (
    <>
      <CodeBar>
        <BarLabel $w={36} htmlFor="place">場所</BarLabel>
        <Combo $n={399}>
          <select id="place" defaultValue="code"><option value="code">コード</option></select>
          <Caret w={5} />
        </Combo>
        <MoreButton $after={60} aria-label="参照">•••</MoreButton>
        <BarLabel $w={74} htmlFor="target">以下にコード</BarLabel>
        <Combo $n={605}>
          <input id="target" placeholder="コード名を入力（CTRL + Q)" />
          <Caret w={5} />
        </Combo>
        <MoreButton $after={12} aria-label="参照">•••</MoreButton>
        <CodeActions>
          <ActionIcon aria-label="コード"><CodeRing w={20} sw={1.800} /></ActionIcon>
          <ActionIcon $line aria-label="コーディング解除"><CodeBadge w={20} kind="x" /></ActionIcon>
          <ActionIcon $line aria-label="In Vivoコード"><CodeBadge w={20} /></ActionIcon>
          <CloseBar>X</CloseBar>
        </CodeActions>
      </CodeBar>
      <StatusBar>
        <Status $after={18}><User size={20} strokeWidth={1.500} />NV</Status>
        <Status>2 アイテム</Status>
        <Status><LinkIcon w={17} />リンク</Status>
        <Status>コード: 32 リファレンス: 139</Status>
        <Status $after={18}><PencilOff size={18} strokeWidth={1.800} />書き込み不可</Status>
        <Status>行: 1 列: 0</Status>
        <Zoomer>
          <button aria-label="縮小">−</button>
          <Slider aria-label="ズーム" defaultValue={50} />
          <button aria-label="拡大">+</button>
        </Zoomer>
        <Percent>100%</Percent>
      </StatusBar>
    </>
  );
}

export default function App() {
  return (
    <>
      <Global />
      <Shell>
        <SideNav />
        <Main>
          <Top />
          <Panels>
            <CodeTree />
            <Document />
          </Panels>
          <Bottom />
        </Main>
      </Shell>
    </>
  );
}
